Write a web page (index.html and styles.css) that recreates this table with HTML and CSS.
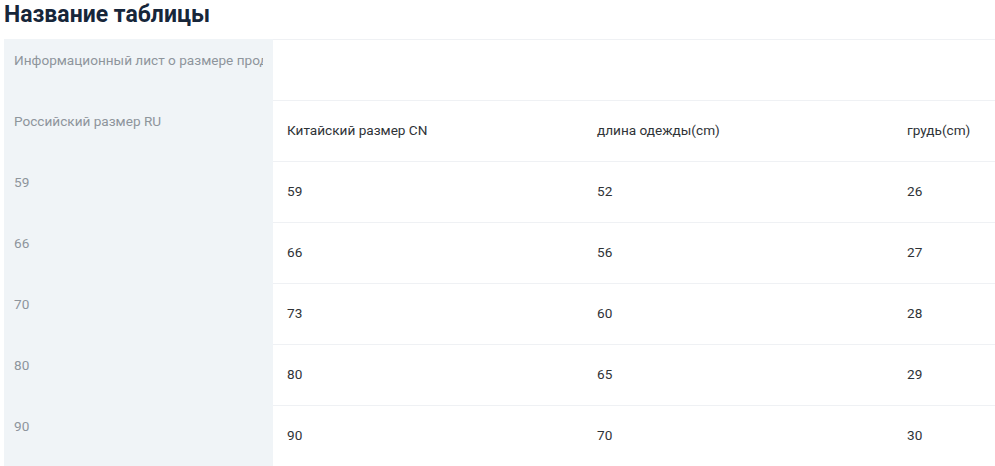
FILE: index.html
```html
<!DOCTYPE html>
<html lang="ru">
<head>
<meta charset="utf-8">
<link rel="stylesheet" href="styles.css">
</head>
<body>
<h1 class="title">Название таблицы</h1>
<div class="table">
  <div class="fixed">
    <div class="fcell"><span class="clip">Информационный лист о размере продукта</span></div>
    <div class="fcell">Российский размер RU</div>
    <div class="fcell">59</div>
    <div class="fcell">66</div>
    <div class="fcell">70</div>
    <div class="fcell">80</div>
    <div class="fcell">90</div>
  </div>
  <div class="scroll">
    <table class="grid">
      <tr><td></td><td></td><td></td></tr>
      <tr><td>Китайский размер CN</td><td>длина одежды(cm)</td><td>грудь(cm)</td></tr>
      <tr><td>59</td><td>52</td><td>26</td></tr>
      <tr><td>66</td><td>56</td><td>27</td></tr>
      <tr><td>73</td><td>60</td><td>28</td></tr>
      <tr><td>80</td><td>65</td><td>29</td></tr>
      <tr><td>90</td><td>70</td><td>30</td></tr>
    </table>
  </div>
</div>
</body>
</html>
```
FILE: styles.css
```css
html, body { margin: 0; padding: 0; background: #fff; }
body { padding: 0 0 0 4px; font-family: Roboto, "Noto Sans", sans-serif; overflow: hidden; }
.title {
  margin: 0;
  height: 39px;
  padding-top: 1px;
  box-sizing: border-box;
  font-family: Roboto, sans-serif;
  font-size: 23px;
  font-weight: 700;
  color: #17263a;
  line-height: 28px;
}
.table { display: flex; }
.fixed { width: 269px; flex: none; background: #f0f4f7; }
.fcell {
  height: 61px;
  box-sizing: border-box;
  padding: 11px 10px 0;
  font-size: 13.6px;
  line-height: 20px;
  color: #8e959c;
  white-space: nowrap;
  overflow: hidden;
}
.clip { display: block; overflow: hidden; white-space: nowrap; }
.scroll { flex: 1; overflow: hidden; }
.grid { border-collapse: collapse; table-layout: fixed; width: 930px; }
.grid td {
  width: 310px;
  height: 61px;
  box-sizing: border-box;
  padding: 0 14px 2px;
  border-top: 1px solid #eff1f4;
  font-size: 13.6px;
  line-height: 20px;
  color: #2f3337;
  vertical-align: middle;
  white-space: nowrap;
}
```
